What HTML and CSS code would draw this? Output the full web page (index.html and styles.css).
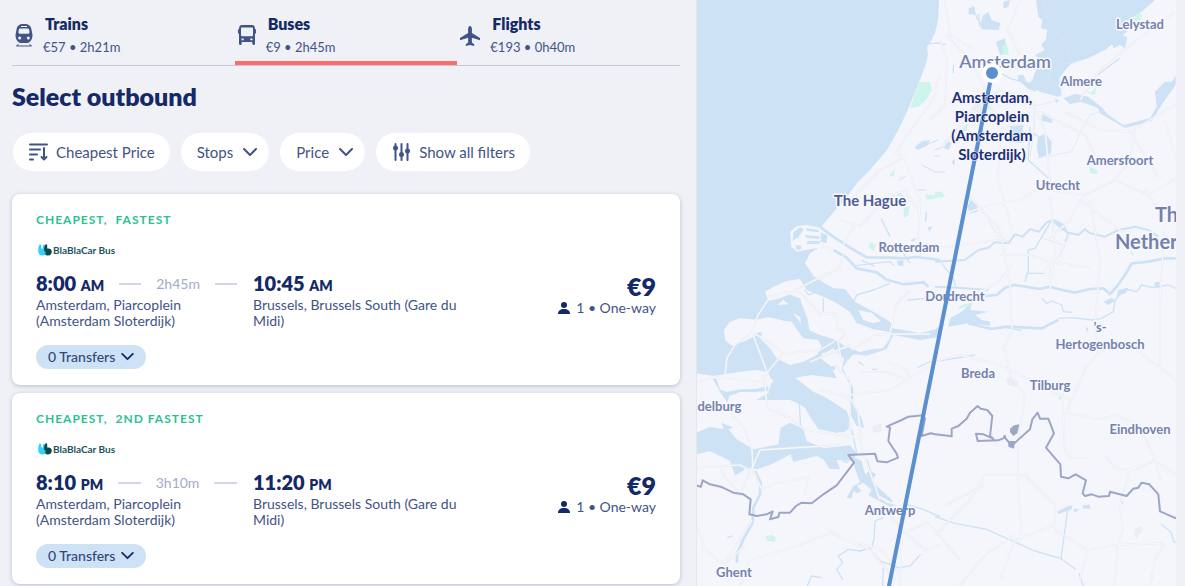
FILE: index.html
```html
<!DOCTYPE html>
<html lang="en">
<head>
<meta charset="utf-8">
<meta name="viewport" content="width=device-width, initial-scale=1">
<title>Select outbound</title>
<link rel="stylesheet" href="styles.css">
</head>
<body>
<svg class="sprite" aria-hidden="true">
  <symbol id="chevron" viewBox="0 0 14 9"><path d="M1 1l6 6 6-6" fill="none" stroke="currentColor" stroke-linecap="round" stroke-linejoin="round"/></symbol>
  <symbol id="person" viewBox="0 0 12 12"><circle cx="6" cy="3" r="3"/><path d="M0 12c0-3.500 2.500-5 6-5s6 1.500 6 5z"/></symbol>
  <symbol id="quotes" viewBox="0 0 14 12"><path fill="#2ed1ff" d="M1.500.5Q3 0 3.200 1.500V4.500Q4.800 3.800 5 5.500V2Q5.200.5 6.600.6L8 6Q8.200 11.500 4.500 11.500.2 11.500.2 6.500.2 2.500 1.500.5z"/><path fill="#054752" d="M7.500.5Q9.300-.2 9.200 1.500V4.500Q13.500 4 13.800 7.700 13.500 11.500 9.800 11.500 6.200 11.500 6 6.500 6 2.500 7.500.5z"/><path fill="#7be35f" d="M6 6.500Q7.800 7 7.600 9L7 10.500Q6 8.800 6 6.500z"/></symbol>
</svg>
<div class="page">
  <main class="results">
    <nav class="modes" aria-label="Travel mode">
      <a class="mode" href="#trains">
        <svg class="mode-icon" viewBox="0 0 18 23" aria-hidden="true"><path fill-rule="evenodd" d="M9 0c5 0 7 2 7.500 5.500L17.500 11c0 4-2 7.500-5 8h-7c-3-.5-5-4-5-8l1-5.500C2 2 4 0 9 0zM6 2v1h6V2zM4.800 4.500c-1 0-1.500 3.500-1.200 4.500.2.500.7.700 1.400.700h8c.7 0 1.200-.2 1.400-.7.300-1-.2-4.500-1.200-4.500zM4.700 12.500a1.500 1.500 0 100 3 1.500 1.500 0 000-3zm8.600 0a1.500 1.500 0 100 3 1.500 1.500 0 000-3z"/><path d="M3.500 20L1.500 22h15l-2-2" fill="none" stroke="currentColor" stroke-width="1"/></svg>
        <span class="mode-text"><strong>Trains</strong><span>€57 • 2h21m</span></span>
      </a>
      <a class="mode mode-active" href="#buses" aria-current="page">
        <svg class="mode-icon" viewBox="0 0 18 23" aria-hidden="true"><path fill-rule="evenodd" d="M4 1h10c2 0 2.700 1 2.900 3v1.200h1.100V9.500h-1V19.500c0 .7-.3 1.500-1.300 1.500s-1.400-.7-1.400-1.500V18H3.700v1.500c0 .8-.4 1.500-1.400 1.500S1 20.200 1 19.500V9.500H0V5.200h1.100V4C1.300 2 2 1 4 1zM4 3.500c-.7 0-1 .3-1 1v6.500c0 .7.300 1.200 1 1.200h10c.7 0 1-.5 1-1.200V4.500c0-.7-.3-1-1-1zM3.500 14.500v1.700h2.200v-1.700zm8.800 0v1.700h2.200v-1.700z"/></svg>
        <span class="mode-text"><strong>Buses</strong><span>€9 • 2h45m</span></span>
      </a>
      <a class="mode" href="#flights">
        <svg class="mode-icon mode-icon-wide" viewBox="0 0 20 22" aria-hidden="true"><path d="M10 1c1.300 0 1.900 1.500 1.900 3v4l8.100 5v2.200l-8.100-2.500v4.800l2.300 1.800V21L10 20l-4.200 1v-1.700l2.300-1.800v-4.800L0 15.200V13l8.100-5V4c0-1.500.6-3 1.900-3z"/></svg>
        <span class="mode-text"><strong>Flights</strong><span>€193 • 0h40m</span></span>
      </a>
    </nav>
    <h1 class="title">Select outbound</h1>
    <div class="filters">
      <button class="filter filter-icon-first" type="button"><svg class="sort-icon" viewBox="0 0 19 18" aria-hidden="true"><path d="M1 1.500h17M1 6.500h10M1 11.500h7M1 16.500h3M15 5v11.500M12.500 14l2.500 2.500 2.500-2.500"/></svg>Cheapest Price</button>
      <button class="filter" type="button" aria-haspopup="true">Stops<svg class="chevron" aria-hidden="true"><use href="#chevron"/></svg></button>
      <button class="filter" type="button" aria-haspopup="true">Price<svg class="chevron" aria-hidden="true"><use href="#chevron"/></svg></button>
      <button class="filter filter-icon-first" type="button"><svg class="sliders-icon" viewBox="0 0 18 18" aria-hidden="true"><path d="M3 1v16M9 1v16M15 1v16"/><circle cx="3" cy="5" r="2.500"/><circle cx="9" cy="11.500" r="2.500"/><circle cx="15" cy="8" r="2.500"/></svg>Show all filters</button>
    </div>

    <article class="card">
      <p class="tags"><span>Cheapest,</span><span>Fastest</span></p>
      <p class="carrier"><svg class="carrier-logo" aria-hidden="true"><use href="#quotes"/></svg>BlaBlaCar Bus</p>
      <div class="trip">
        <div class="leg">
          <div class="times"><span class="time">8:00 <small>AM</small></span><span class="dash"></span><span class="duration">2h45m</span><span class="dash"></span></div>
          <p class="place">Amsterdam, Piarcoplein (Amsterdam Sloterdijk)</p>
        </div>
        <div class="leg">
          <div class="times"><span class="time">10:45 <small>AM</small></span></div>
          <p class="place">Brussels, Brussels South (Gare du Midi)</p>
        </div>
        <div class="fare">
          <strong class="price">€9</strong>
          <span class="riders"><svg class="person" aria-hidden="true"><use href="#person"/></svg>1 • One-way</span>
        </div>
      </div>
      <button class="transfers" type="button">0 Transfers<svg class="chevron chevron-bold" aria-hidden="true"><use href="#chevron"/></svg></button>
    </article>

    <article class="card">
      <p class="tags"><span>Cheapest,</span><span>2nd fastest</span></p>
      <p class="carrier"><svg class="carrier-logo" aria-hidden="true"><use href="#quotes"/></svg>BlaBlaCar Bus</p>
      <div class="trip">
        <div class="leg">
          <div class="times"><span class="time">8:10 <small>PM</small></span><span class="dash"></span><span class="duration">3h10m</span><span class="dash"></span></div>
          <p class="place">Amsterdam, Piarcoplein (Amsterdam Sloterdijk)</p>
        </div>
        <div class="leg">
          <div class="times"><span class="time">11:20 <small>PM</small></span></div>
          <p class="place">Brussels, Brussels South (Gare du Midi)</p>
        </div>
        <div class="fare">
          <strong class="price">€9</strong>
          <span class="riders"><svg class="person" aria-hidden="true"><use href="#person"/></svg>1 • One-way</span>
        </div>
      </div>
      <button class="transfers" type="button">0 Transfers<svg class="chevron chevron-bold" aria-hidden="true"><use href="#chevron"/></svg></button>
    </article>
  </main>

  <aside class="map" aria-label="Route map">
    <svg class="map-canvas" viewBox="697 0 479 586" preserveAspectRatio="xMinYMin slice">
      <!-- North Sea -->
      <path class="water" d="M690 0H939L938 20 935 33 930 43 927 47 928 55 925 67 919 82 909 107 900 127 887 150 870 170 857 183 847 197 837 208 821 227V400H690Z"/>
      <g transform="translate(690 195) scale(.33333)">
        <path class="land" d="M392 95L470 150 530 185 540 200 470 180 400 150 360 175 345 205 372 245 430 280 465 282 495 320 550 350 600 380 620 600 392 620 365 590 315 550 320 540 400 535 440 550 425 515 390 490 400 475 450 480 420 100Z"/>
        <path class="water" d="M330 252L372 245 430 280 465 282 495 320 550 350 600 380 608 400 640 405 690 415 750 400V425L690 435 610 420 590 462 530 482 490 478 470 500 458 520 490 580V600L480 570 453 520 455 490 430 460 385 485 425 515 440 550 365 540 315 548 365 590 300 600 200 560 300 350Z"/>
        <path class="land" d="M225 290L250 275 290 258 330 252 350 285 400 305 440 325 480 350 500 385 550 403 604 412 600 430 580 460 545 463 510 472 470 455 430 432 390 420 358 405 352 370 340 340 330 310 300 298 270 310 235 318Z"/>
        <path class="land" d="M505 346L545 353 573 378 550 385 520 375ZM262 330L280 315 296 328ZM308 352L330 367 334 387ZM395 475L440 470 462 490 455 525 440 545 422 515Z"/>
        <path class="land" d="M102 405L120 380 150 370 200 374 235 366 285 378 305 380 325 410 340 430 385 435 395 455 380 480 340 500 300 510 260 490 240 460 200 420 165 438 125 452 105 435Z"/>
        <!-- Maasvlakte harbour -->
        <path class="land" d="M300 110L320 93 350 90 392 98 470 155 475 185 410 155 345 165 322 170 304 155Z"/>
        <path class="water" d="M310 112L330 97 342 103 325 125 308 138ZM348 100L385 104 388 112 350 107ZM345 120L388 124 388 133 348 128ZM352 138L390 138 390 146 350 148ZM316 150L335 152 332 163 320 165ZM392 112L412 120 410 145 392 140ZM314 128L326 122 328 130Z"/>
        <path class="river w8" d="M392 97L430 125 480 158 530 187 600 188 640 190 680 186 750 195M430 165L470 188 500 220 560 232 590 254 640 268 700 262 715 275"/>
        <path class="river w4" d="M490 325L500 300 550 285 600 265M500 212L550 205 600 200 612 212M515 195L555 215M640 175L660 205M574 72L600 125M710 50L706 80M400 310V350M345 285L355 300 382 290M652 315L715 310M505 500L520 510M545 523H562M682 518L725 498M210 350L240 360 280 335"/>
        <path class="water" d="M620 198L640 195 640 213 625 212ZM712 95L728 95 718 110ZM415 514H435V525H415ZM202 412H215V424H202ZM660 135L680 128 670 140ZM268 372L292 360 290 375Z"/>
        <path class="park" d="M535 155L542 141 558 150 552 168ZM642 70L640 40 660 32 655 60ZM705 0H750L740 10 712 15Z"/>
      </g>

      <!-- Oosterschelde, Westerschelde and Antwerp docks -->
      <g transform="translate(690 386) scale(.33333)">
        <path class="land" d="M20-38L70-30 150-43 200-48 230-43 250-13 240 2 272 22 235 22 20 140Z"/>
        <path class="water" d="M245-10L315-25 370 17 400 30 440 55 470 75 485 120 465 137 440 140 385 130 365 100 345 65 320 50 270 30 235 20ZM65-28L80-20 90 10 110 18 150 10 200 8 235 0V15L195 18 150 18 118 30 112 50 92 20ZM478 0H488L490 60 515 95 522 125 500 120 478 80Z"/>
        <path class="water" d="M20 140L60 122 100 130 95 110 130 125 115 130 140 160 190 190 265 175 272 125 300 110 340 128 350 165 400 187 480 178 500 200 490 225 440 222 450 250 418 248 400 220 380 210 310 228 302 205 245 235 200 250 165 245 160 255 135 268 120 225 60 195 20 205Z"/>
        <path class="water" d="M482 210L515 225 525 265 540 255 558 265 545 285 570 310 605 340 607 350 570 330 555 325 590 350 620 358 600 362 535 328 545 312 520 290 500 300 515 315 500 322 490 315 485 338 470 335 490 300 510 290Z"/>
        <path class="river w8" d="M195 255L212 290 210 325 190 365 188 410 160 460 142 500 140 530"/>
        <path class="river w4" d="M328 48L332 130M485 130L500 200M580 395L555 405 552 460 545 485 510 495 475 490M475 490L445 510 458 530 440 550 458 580M352 600L365 570 395 575M535 485L570 525 625 545 660 540 692 505M580 545L578 600M650 355L700 370 750 392M530 220L545 265 555 262M112 455L128 450M460 225L475 230"/>
        <path class="park" d="M228 450L245 446 257 455 255 467 230 464Z"/>
      </g>

      <!-- IJsselmeer and the Randmeren -->
      <g transform="translate(935 0) scale(.33333)">
        <path class="water" d="M303 0L310 50 322 60 318 85 337 90 332 120 318 135 330 150 300 165 322 185 305 205 292 240 275 255 315 275 370 290 380 285 373 235 395 205 410 190 460 175 510 150 550 118 575 95 580 60 620 35 660 0Z"/>
        <path class="water" d="M385 295L420 282 460 290 500 322 520 345 565 375 645 355 665 320 660 275 690 245 710 245 722 228V255L700 285 670 330 652 362 570 384 495 340 490 325 440 305 405 312Z"/>
        <path class="water" d="M540 115L560 105 577 110 570 145 555 135 535 145 530 128ZM102 25L120 20 118 45 100 42ZM145 45L160 35 170 60 197 70 190 90 140 88 135 72ZM205 5L225 0 220 22 205 25ZM183 125L210 115 215 160 195 165ZM320 345L350 348 352 370 320 362ZM310 410L330 400 350 425 348 460 312 475 305 440ZM225 378L265 375 260 430 230 425ZM0 0H12L5 50 0 80ZM30 420L50 430 40 450 28 445ZM248 225L265 225 275 245 300 255 303 275 280 268 250 240ZM360 295L370 300 365 312ZM50 485L60 475 58 500Z"/>
        <path class="river w4" d="M0 128L32 134M130 40L135 80M285 380L280 480 340 535M112 18L128 60M0 450L25 440M480 230L555 175M190 215L225 235 260 245M140 385L150 410M55 195V220M295 400L310 410"/>
        <path class="park" d="M200 140L215 130 222 165 205 165ZM598 55L610 38 622 45 615 62 600 65ZM455 270L465 278 485 262 480 285 460 280ZM462 500L490 512 485 522 465 520ZM155 310L175 330 160 328ZM85 380L100 370 95 390 75 400ZM0 575L20 575 30 590 0 592Z"/>
        <path class="town" d="M120 310L150 305 145 345 105 330Z"/>
        <path class="rail" d="M325 0L345 80 380 110 412 190 380 192 340 220 345 250 375 285M298 310V390L285 470M290 320L375 300M305 475L410 455 440 390 465 345 495 335"/>
      </g>

      <!-- Rhine, Waal and Meuse -->
      <g transform="translate(935 195) scale(.33333)">
        <path class="river w6" d="M0 200L90 195 130 165 160 158 180 142 220 145 240 118 262 125 285 103 312 110 335 82 355 75 385 90 395 112 430 120 450 102 465 115 510 125 550 105 600 95 640 105 670 125M0 275L70 278 160 285"/>
        <path class="river w8" d="M150 303L185 300 210 278 240 270 315 282 345 275 390 287 420 293 465 282 505 280 525 297 545 275 570 240 590 205 640 200 690 190 722 190M100 385L170 402 215 395 320 400 370 375"/>
        <path class="river w4" d="M370 370L415 368 470 375 500 370 535 350 540 315 570 282 605 290 620 270 655 278 700 270 722 280M280 235V165L300 160 330 110 350 75M280 235H328M345 75L400 115 390 140M320 310L335 325 350 318 380 330 385 350 412 352M270 260L280 225M20 205L55 250 62 275M120 480L0 500M215 398L260 407"/>
        <path class="water" d="M45 370L80 350 112 320 105 345 160 350 120 360 140 375 165 380 165 392 100 385 40 395ZM110 10L125 25 128 50 105 55 97 35ZM0 405L10 395 30 385 0 425ZM505 320L530 308 540 318 520 330ZM452 395L460 400 455 415ZM660 262L675 260 672 278 658 275ZM588 168L598 180 590 178ZM550 285L580 278 575 292 545 305ZM350 75L375 85 390 105 380 108 370 92Z"/>
        <path class="park" d="M70 340L85 328 108 325 105 335 85 337 68 345ZM0-10L20-8 30 5 0 8Z"/>
        <path class="town" d="M213 555L225 545 250 560 248 578 220 570Z"/>
        <path class="rail" d="M405 120L370 190 350 200 325 230M325 130L388 152M160 75L190 125 230 145"/>
      </g>

      <!-- Kempen canals -->
      <g transform="translate(935 386) scale(.33333)">
        <path class="river w4" d="M0 392L60 412 155 430 240 468 300 495 378 518 422 550M398 372L378 518M432 562L445 600M678 415L708 438 715 465 722 470"/>
        <path class="water" d="M367 377L395 362 412 358 410 370 370 384ZM415 368L435 370 418 380ZM443 358L465 356 465 368 445 368ZM556 350L562 343 564 356Z"/>
        <path class="park" d="M372 32L388 22 385 38 374 42Z"/>
        <path class="town" d="M600 430L615 420 625 435 612 445 605 458 597 445Z"/>
      </g>
      <path class="town" d="M872 427L881 423 882 431 874 433Z"/>
      <path class="park" d="M919 82L930 82 932 90 926 100 918 107 910 108ZM889 175L895 169 894 177ZM893 195L899 191 905 197Z"/>
      <path class="river w1" d="M925 44L940 43M915 148L922 142 928 144 938 140M899 180L906 176M922 165L935 172 945 172M918 190H925M934 156H940"/>
      <path class="water" d="M915 147L922 141 930 140 927 146 917 150Z"/>

      <!-- Roads: pale casing with a lighter core -->
      <g class="roads">
        <path id="road-net" d="M940 74L933 100 918 120 904 140 896 153 904 158 920 200 918 240M904 158L880 170 868 182 845 205M840 220L860 226 885 200 905 190 918 210M930 120L945 105 947 60 940 40M946 35L970 60 985 90 1000 130 998 180 1012 230M940 150L965 120 1000 90 1030 100 1045 130 1050 180M985 60L1010 70 1035 60M1020 0L1008 30 1020 55M945 0L950 35 975 50M1050 180L1020 200 990 205 960 215M1080 100L1100 70 1130 45 1175 12M1065 112L1100 130 1130 132 1158 178M1165 120L1176 160M1130 132L1175 105M1000 130L1040 112 1085 135 1095 155M1050 190L1085 195 1115 180 1148 195 1176 178M1115 180L1130 160 1135 130M1050 195L1055 250 1050 290M920 250L960 245 1000 240M855 225L843 245M852 350L875 335 890 334H930M720 470L740 495 760 450 840 445M890 334L896 305 910 290M795 290L815 280 840 268 843 255M833 252L822 245 822 250M767 298L785 292 800 292 812 305 820 314 835 313 838 328 845 333M752 332L758 315 768 300M725 375L727 358 735 345 752 332 765 340 785 354 820 350 835 341M752 332L770 380M697 382L715 377 765 382 767 408 790 418 805 430 860 438M783 353L763 378M770 380L760 376M730 410L745 430 752 450 753 470 762 490 770 485 808 477 805 495M752 471L740 465 697 468M861 438L850 435 850 380 835 365M820 390L850 398 858 410 862 450 880 500M845 334L838 342 842 365M860 372H887L907 380M887 362L905 368 910 378M848 395L890 390 940 360 960 355 1000 365 1030 380 1070 400M1005 350L1010 375 1025 395 1018 440 1018 480 1022 540M940 300L985 290 1000 280 1012 265M968 195L1000 230 1010 285 1012 330 1003 350M1048 240L1070 220 1080 200 1120 230 1140 240M1090 268L1050 262 1050 285M1050 262L1030 255 1000 255M1090 200L1100 260 1095 330 1100 350 1130 345 1176 380M1100 350L1085 370 1065 415M1145 190L1165 220 1160 300 1160 370M935 535L970 500 985 475 1025 475 1055 505 1055 530 1088 550 1115 545 1165 543M1055 525L1015 540 1000 580M945 505L985 485M1062 395L1065 450 1070 458 1090 458M1065 412L1100 420 1115 415 1140 425 1155 460 1160 480M1105 455L1115 468 1135 470 1155 460 1176 475M1130 468L1120 505 1123 530 1117 550 1115 586M1165 543L1155 560 1150 586M1088 550L1080 580M960 586L985 555 1015 535M908 531L927 523 935 530 960 560M895 580L870 550 830 533 800 545 750 560 740 586M697 525L705 550 725 565 745 545M752 520L720 570M830 530L848 540 882 550 900 575M887 510L902 530 900 586M902 530L925 550 940 545M810 362L850 345"/>
        <use href="#road-net" class="road-core"/>
      </g>

      <!-- National border and the Baarle enclaves -->
      <g class="border" transform="translate(690 386) scale(.33333)">
        <path d="M18 298L33 302 38 283 60 295 92 302 130 320 160 325 182 340 178 385 200 390 230 385 248 376 240 400 265 393 268 380 300 380 318 360 335 350 365 352 400 325 440 298 492 230 475 207 555 203 562 226 590 229 624 215 620 203 595 165 600 125 590 122 635 102 655 92 700 88 705 98 695 150 722 142 735 145 785 151V128L805 120 830 98 840 80 863 60 872 68 892 72 907 90 900 150 910 158 880 145 858 143 863 165 925 163 945 155 965 180 975 170 1020 130 1027 100 1043 80 1050 98 1075 98 1092 142 1068 185 1111 235 1113 272 1135 277 1157 265 1188 283 1178 322 1185 330 1205 325 1225 332 1257 330 1260 317 1310 330 1330 308 1345 305 1355 290 1378 295 1405 325 1410 376 1458 397"/>
        <path class="enclave" d="M960 128L972 118 988 115 982 142 970 150 960 138ZM955 165L975 165 972 188 955 182ZM940 148H948V155H940Z"/>
      </g>

      <g class="labels">
        <text x="1140" y="29">Lelystad</text>
        <text class="label-city" x="1005" y="68">Amsterdam</text>
        <text x="1081" y="86">Almere</text>
        <text x="1120" y="165">Amersfoort</text>
        <text x="1058" y="190">Utrecht</text>
        <text class="label-hague" x="870" y="206">The Hague</text>
        <text x="909" y="252">Rotterdam</text>
        <text class="label-country" x="1155" y="222">The</text>
        <text class="label-country" x="1115" y="249">Netherlands</text>
        <text x="955" y="301">Dordrecht</text>
        <text x="1100" y="332">’s-</text>
        <text x="1100" y="349">Hertogenbosch</text>
        <text x="978" y="378">Breda</text>
        <text x="1050" y="390">Tilburg</text>
        <text x="708" y="411">Middelburg</text>
        <text x="1140" y="434">Eindhoven</text>
        <text x="890" y="515">Antwerp</text>
        <text x="734" y="577">Ghent</text>
      </g>
      <path class="route" d="M992 73L889 586V590"/>
      <circle class="stop" cx="992" cy="73" r="8"/>
      <text class="stop-label"><tspan x="992" y="103">Amsterdam,</tspan><tspan x="992" y="122">Piarcoplein</tspan><tspan x="992" y="141">(Amsterdam</tspan><tspan x="992" y="160">Sloterdijk)</tspan></text>
    </svg>
  </aside>
</div>
</body>
</html>
```
FILE: styles.css
```css
* { box-sizing: border-box; }

body {
  margin: 0;
  background: #f0f1f6;
  color: #132968;
  font-family: Lato, "Noto Sans", sans-serif;
  font-size: 14px;
  line-height: 16px;
}

p, h1 { margin: 0; }
button { font: inherit; color: inherit; border: 0; cursor: pointer; }
a { color: inherit; text-decoration: none; }
.sprite { position: absolute; width: 0; height: 0; }

.page {
  display: grid;
  grid-template-columns: minmax(0, 29fr) minmax(0, 20fr);
  padding-right: 9px;
}

.results { padding: 0 16px 2px 12px; }

/* Travel modes */
.modes {
  display: grid;
  grid-template-columns: repeat(3, 1fr);
  border-bottom: 1px solid #c5c8d0;
}
.mode {
  display: flex;
  align-items: center;
  gap: 10px;
  padding: 14px 2px 4px 3px;
  border-bottom: 4px solid transparent;
  color: #425486;
}
.mode-active { border-bottom-color: #ff6b6b; }
.mode-icon { width: 18px; height: 23px; fill: currentColor; }
.mode-icon-wide { width: 20px; height: 22px; }
.mode-text { display: flex; flex-direction: column; gap: 3px; }
.mode-text strong { padding-left: 2px; font-size: 16px; line-height: 20px; font-weight: 800; color: #132968; }
.mode-text span { font-size: 13px; line-height: 20px; }

.title { margin-top: 14px; font-size: 25px; line-height: 32px; font-weight: 800; }

/* Filters */
.filters { display: flex; flex-wrap: wrap; gap: 11px; margin: 21px 0 23px; padding-left: 1px; }
.filter {
  display: flex;
  align-items: center;
  gap: 10px;
  height: 38px;
  padding: 0 12px 0 16px;
  border-radius: 19px;
  background: #fff;
  color: #425486;
  font-size: 15px;
}
.filter-icon-first { gap: 8px; padding: 0 15px 0 16px; }
.sort-icon, .sliders-icon { width: 19px; height: 18px; fill: none; stroke: currentColor; stroke-width: 2; stroke-linecap: round; stroke-linejoin: round; }
.sliders-icon circle { fill: currentColor; stroke: none; }
.chevron { width: 14px; height: 9px; stroke-width: 2; }

/* Result cards */
.card {
  margin-bottom: 8px;
  padding: 16px 24px;
  border-radius: 8px;
  background: #fff;
  box-shadow: 0 1px 4px rgba(19, 41, 104, .25);
}
.card:last-child { margin-bottom: 0; }
.tags {
  display: flex;
  gap: 8px;
  font-size: 12px;
  line-height: 20px;
  font-weight: 700;
  letter-spacing: 1px;
  text-transform: uppercase;
  color: #2cc195;
}
.carrier {
  display: flex;
  align-items: center;
  gap: 1px;
  margin-top: 12px;
  padding-left: 2px;
  font-size: 10px;
  font-weight: 700;
  color: #1b5560;
}
.carrier-logo { width: 14px; height: 12px; }
.trip {
  display: grid;
  grid-template-columns: minmax(0, 201fr) minmax(0, 224fr) minmax(0, 163fr);
  column-gap: 16px;
  margin-top: 14px;
}
.times { display: flex; align-items: center; gap: 15px; height: 24px; }
.time { font-size: 20px; font-weight: 800; white-space: nowrap; }
.time small { font-size: 14px; }
.duration { color: #a4abc8; }
.dash { flex: 1; height: 2px; background: #d3d7e6; }
.place { margin-top: 1px; color: #425486; }
.fare { display: flex; flex-direction: column; align-items: flex-end; padding-top: 2px; }
.price { font-size: 25px; line-height: 24px; font-weight: 800; }
.riders { display: flex; align-items: center; gap: 6px; margin-top: 2px; color: #425486; }
.person { width: 12px; height: 12px; fill: #132968; }
.transfers {
  display: flex;
  align-items: center;
  gap: 6px;
  height: 24px;
  margin-top: 16px;
  padding: 0 12px;
  border-radius: 12px;
  background: #cde2f5;
  color: #34477d;
  font-weight: 500;
}
.chevron-bold { width: 13px; height: 8px; color: #132968; stroke-width: 2; }

/* Map */
.map {
  position: sticky;
  top: 0;
  height: 100vh;
  border-left: 1px solid #e6e8ec;
  background: #f4f6fb;
}
.map-canvas { display: block; width: 100%; height: 100%; }
.water { fill: #cde2f5; }
.land { fill: #f4f6fb; }
.park { fill: #cff4ea; }
.town { fill: #ebedef; }
.river { fill: none; stroke: #cde2f5; stroke-linejoin: round; }
.w8 { stroke-width: 8px; }
.w6 { stroke-width: 6px; }
.w4 { stroke-width: 4px; }
.w1 { stroke-width: 1px; }
.rail { fill: none; stroke: #dfe4f0; stroke-width: 2px; }
.roads { fill: none; stroke: #e8eaef; stroke-width: 2px; stroke-linejoin: round; }
.road-core { stroke: #f8f9fc; stroke-width: 1px; }
.border { fill: none; stroke: #9da6c6; stroke-width: 6px; stroke-linejoin: round; }
.enclave { fill: #9da6c6; stroke: none; }
.labels text, .stop-label {
  fill: #7581ad;
  stroke: #f7f9fd;
  stroke-width: 3px;
  stroke-linejoin: round;
  paint-order: stroke;
  text-anchor: middle;
  font-size: 13px;
  font-weight: 700;
}
.labels .label-city { font-size: 18px; font-weight: 600; }
.labels .label-hague { font-size: 15px; fill: #4f5c94; }
.labels .label-country { font-size: 20px; text-anchor: start; }
.route { fill: none; stroke: #5b8fd0; stroke-width: 4px; }
.stop { fill: #5b8fd0; stroke: #fff; stroke-width: 4px; }
.labels + .route + .stop + .stop-label { font-size: 15px; fill: #1d3076; stroke-width: 1px; }
```
